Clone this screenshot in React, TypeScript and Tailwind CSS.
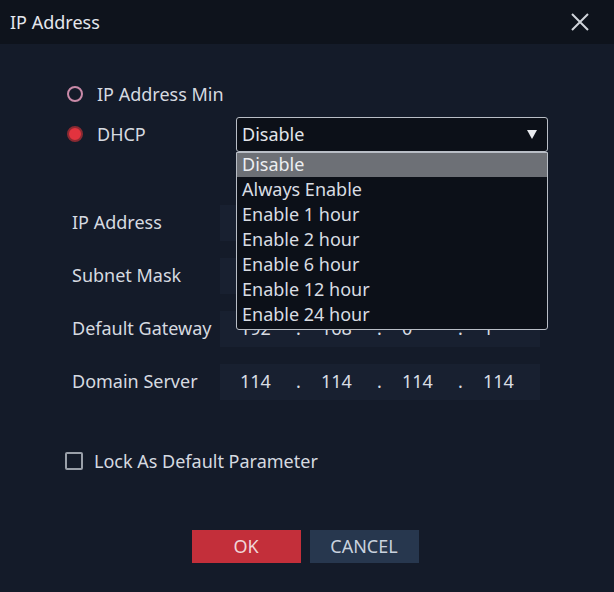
import React from "react";

const options = [
  "Disable",
  "Always Enable",
  "Enable 1 hour",
  "Enable 2 hour",
  "Enable 6 hour",
  "Enable 12 hour",
  "Enable 24 hour",
];

const fields = [
  { label: "IP Address", parts: ["", "", "", ""] },
  { label: "Subnet Mask", parts: ["", "", "", ""] },
  { label: "Default Gateway", parts: ["192", "168", "0", "1"] },
  { label: "Domain Server", parts: ["114", "114", "114", "114"] },
];

function IpField({ parts }: { parts: string[] }) {
  return (
    <div className="w-[320px] h-[36px] bg-[#182030] flex items-center pl-[20px] text-[18px] text-[#d9dde3]">
      {parts.map((p, i) => (
        <React.Fragment key={i}>
          <span className="w-[56px]">{p}</span>
          {i < 3 && <span className="w-[25px]">{p ? "." : ""}</span>}
        </React.Fragment>
      ))}
    </div>
  );
}

export default function App() {
  return (
    <div
      className="w-[614px] h-[592px] bg-[#141b29] flex flex-col text-[#d6dae0]"
      style={{ fontFamily: '"Noto Sans", "Open Sans", sans-serif' }}
    >
      {/* Header */}
      <div className="h-[44px] bg-[#0e131c] flex items-center justify-between pl-[10px] pr-[24px]">
        <span className="text-[18px] text-[#e4e7ec]">IP Address</span>
        <svg width="20" height="20" viewBox="0 0 20 20" className="text-[#d0d4da]">
          <path d="M2 2 L18 18 M18 2 L2 18" stroke="currentColor" strokeWidth="2" />
        </svg>
      </div>

      <div className="flex flex-col pt-[30px]">
        {/* Radio: IP Address Min */}
        <div className="h-[40px] flex items-center pl-[67px]">
          <span className="w-[16px] h-[16px] rounded-full border-2 border-[#c98aa8]" />
          <span className="ml-[14px] text-[18px]">IP Address Min</span>
        </div>

        {/* Radio: DHCP + select */}
        <div className="h-[40px] flex items-center pl-[67px]">
          <span className="w-[16px] h-[16px] rounded-full bg-[#e2333e] border-2 border-[#8a2a32]" />
          <span className="ml-[14px] text-[18px] w-[139px]">DHCP</span>
          <div className="relative">
            <div className="w-[312px] h-[35px] rounded-[3px] border border-[#b9bec6] bg-[#0c1018] flex items-center justify-between pl-[5px] pr-[10px] text-[18px] text-[#e2e5ea]">
              <span>Disable</span>
              <svg width="10" height="9" viewBox="0 0 10 9">
                <path d="M0 0 H10 L5 9 Z" fill="#e8eaee" />
              </svg>
            </div>
            {/* Dropdown list */}
            <div className="absolute left-0 top-[35px] z-10 w-[312px] rounded-b-[3px] border border-[#b9bec6] bg-[#0c1018] text-[18px] leading-[25px] pb-[2px]">
              {options.map((o, i) => (
                <div
                  key={o}
                  className={
                    i === 0
                      ? "h-[24px] bg-[#6d7076] text-[#eceef1] pl-[5px] flex items-center"
                      : "h-[25px] text-[#d9dde3] pl-[5px] flex items-center"
                  }
                >
                  {o}
                </div>
              ))}
            </div>
          </div>
        </div>

        {/* IP fields */}
        <div className="flex flex-col mt-[42px]">
          {fields.map((f) => (
            <div key={f.label} className="h-[53px] flex items-center pl-[72px]">
              <span className="w-[148px] text-[18px]">{f.label}</span>
              <IpField parts={f.parts} />
            </div>
          ))}
        </div>

        {/* Checkbox */}
        <div className="h-[30px] mt-[38px] flex items-center pl-[65px]">
          <span className="w-[18px] h-[18px] rounded-[2px] border-2 border-[#9aa0a9]" />
          <span className="ml-[11px] text-[18px]">Lock As Default Parameter</span>
        </div>

        {/* Buttons */}
        <div className="mt-[54px] flex justify-center gap-[9px] pr-[4px]">
          <button className="w-[109px] h-[33px] bg-[#c32f3a] text-[18px] text-[#f0d6d8]">OK</button>
          <button className="w-[109px] h-[33px] bg-[#27374e] text-[18px] text-[#c9d2de]">CANCEL</button>
        </div>
      </div>
    </div>
  );
}
